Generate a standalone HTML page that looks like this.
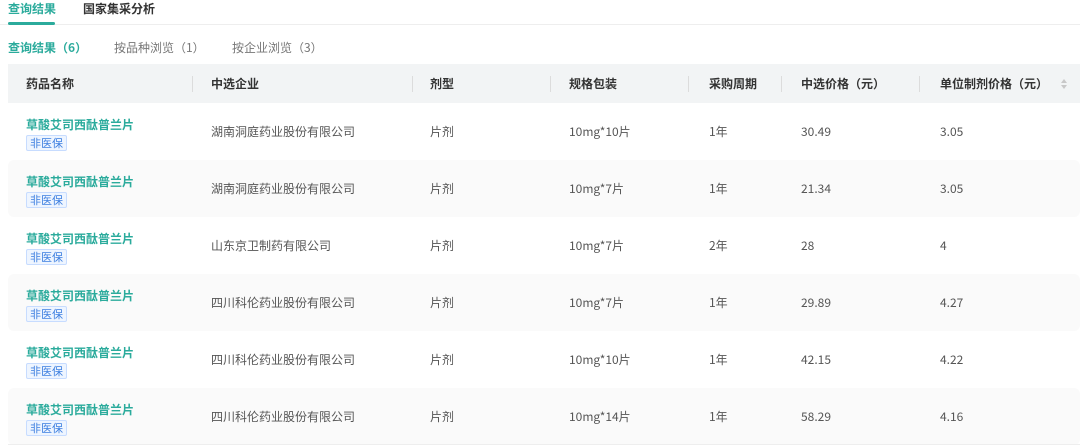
<!DOCTYPE html>
<html><head><meta charset="utf-8"><style>
*{margin:0;padding:0;box-sizing:border-box}
body{width:1080px;height:446px;background:#fff;font-family:"Noto Sans CJK SC","Liberation Sans",sans-serif;color:#555;position:relative;overflow:hidden;font-size:12px}
.a{position:absolute;white-space:nowrap;line-height:16px}
.g{color:#2bab9c}
.hdr{position:absolute;left:8px;top:64px;width:1072px;height:39px;background:#f2f4f5}
.hdr span{position:absolute;top:12px;line-height:16px;font-weight:bold;color:#333;font-size:12px}
.dv{position:absolute;top:12px;width:1px;height:16px;background:#dcdcdc}
.row{position:absolute;left:8px;width:1072px;height:57px}
.row.s{background:#fafafa;border-radius:6px}
.row span{position:absolute;top:21px;line-height:16px;font-size:12px;color:#555}
.row .nm{top:14px;left:18px;font-weight:bold;color:#2bab9c}
.row .tg{top:32px;left:18px;font-size:11px;color:#3d7fe0;background:#eef5ff;border:1px solid #c7dcff;padding:0 3px;line-height:14px;border-radius:2px}
</style></head><body>
<div class="a g" style="left:8px;top:1px;font-size:12px;font-weight:bold">查询结果</div>
<div class="a" style="left:83px;top:1px;font-size:12px;font-weight:bold;color:#333">国家集采分析</div>
<div class="a" style="left:0;top:24px;width:1080px;height:1px;background:#eee"></div>
<div class="a" style="left:8px;top:22px;width:47px;height:3px;background:#2bab9c;border-radius:2px"></div>
<div class="a g" style="left:8px;top:40px;font-weight:bold">查询结果（6）</div>
<div class="a" style="left:114px;top:40px;color:#777">按品种浏览（1）</div>
<div class="a" style="left:232px;top:40px;color:#777">按企业浏览（3）</div>
<div class="hdr">
<span style="left:18px">药品名称</span><div class="dv" style="left:184px"></div>
<span style="left:203px">中选企业</span><div class="dv" style="left:404px"></div>
<span style="left:422px">剂型</span><div class="dv" style="left:542px"></div>
<span style="left:561px">规格包装</span><div class="dv" style="left:680px"></div>
<span style="left:701px">采购周期</span><div class="dv" style="left:773px"></div>
<span style="left:793px">中选价格（元）</span><div class="dv" style="left:911px"></div>
<span style="left:932px">单位制剂价格（元）</span>
<svg style="position:absolute;left:1052px;top:14px" width="8" height="12" viewBox="0 0 8 12"><path d="M1 5L4 1L7 5Z M1 7L4 11L7 7Z" fill="#c8c8c8"/></svg>
</div>
<div class="row" style="top:103px"><span class="nm">草酸艾司西酞普兰片</span><span class="tg">非医保</span><span style="left:203px">湖南洞庭药业股份有限公司</span><span style="left:422px">片剂</span><span style="left:561px">10mg*10片</span><span style="left:701px">1年</span><span style="left:793px">30.49</span><span style="left:932px">3.05</span></div>
<div class="row s" style="top:160px"><span class="nm">草酸艾司西酞普兰片</span><span class="tg">非医保</span><span style="left:203px">湖南洞庭药业股份有限公司</span><span style="left:422px">片剂</span><span style="left:561px">10mg*7片</span><span style="left:701px">1年</span><span style="left:793px">21.34</span><span style="left:932px">3.05</span></div>
<div class="row" style="top:217px"><span class="nm">草酸艾司西酞普兰片</span><span class="tg">非医保</span><span style="left:203px">山东京卫制药有限公司</span><span style="left:422px">片剂</span><span style="left:561px">10mg*7片</span><span style="left:701px">2年</span><span style="left:793px">28</span><span style="left:932px">4</span></div>
<div class="row s" style="top:274px"><span class="nm">草酸艾司西酞普兰片</span><span class="tg">非医保</span><span style="left:203px">四川科伦药业股份有限公司</span><span style="left:422px">片剂</span><span style="left:561px">10mg*7片</span><span style="left:701px">1年</span><span style="left:793px">29.89</span><span style="left:932px">4.27</span></div>
<div class="row" style="top:331px"><span class="nm">草酸艾司西酞普兰片</span><span class="tg">非医保</span><span style="left:203px">四川科伦药业股份有限公司</span><span style="left:422px">片剂</span><span style="left:561px">10mg*10片</span><span style="left:701px">1年</span><span style="left:793px">42.15</span><span style="left:932px">4.22</span></div>
<div class="row s" style="top:388px"><span class="nm">草酸艾司西酞普兰片</span><span class="tg">非医保</span><span style="left:203px">四川科伦药业股份有限公司</span><span style="left:422px">片剂</span><span style="left:561px">10mg*14片</span><span style="left:701px">1年</span><span style="left:793px">58.29</span><span style="left:932px">4.16</span></div>
<div class="a" style="left:8px;top:444px;width:1072px;height:1px;background:#eee"></div>
</body></html>
